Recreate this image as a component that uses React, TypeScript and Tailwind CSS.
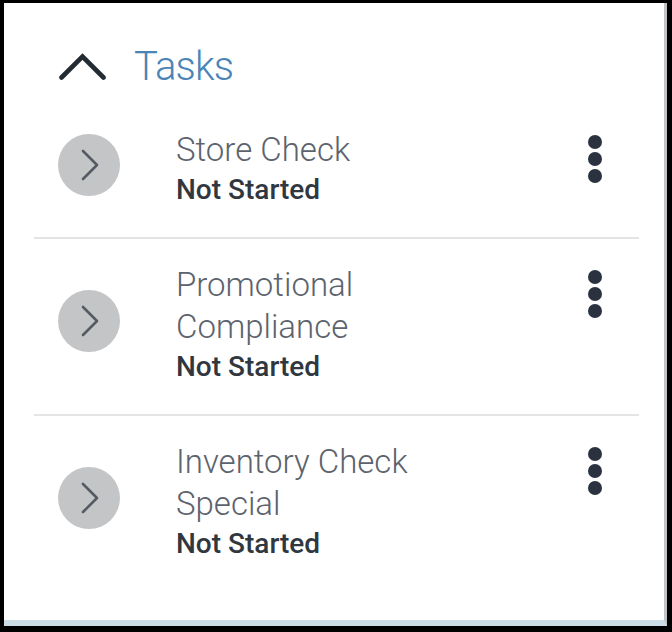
import React from "react";

const tasks: { lines: string[] }[] = [
  { lines: ["Store Check"] },
  { lines: ["Promotional", "Compliance"] },
  { lines: ["Inventory Check", "Special"] },
];

function Kebab() {
  return (
    <div className="mt-[6px] mr-[37px] flex w-[14px] flex-col gap-[3px]">
      <span className="block h-[14px] w-[14px] rounded-full bg-[#2a3240]" />
      <span className="block h-[14px] w-[14px] rounded-full bg-[#2a3240]" />
      <span className="block h-[14px] w-[14px] rounded-full bg-[#2a3240]" />
    </div>
  );
}

function Row({ lines, last }: { lines: string[]; last: boolean }) {
  return (
    <div
      className={
        last
          ? "flex items-center pt-[25px] pb-[28px]"
          : "flex items-center border-b-2 border-[#e3e4e5] pt-[25px] pb-[28px]"
      }
    >
      <div className="ml-[24px] mb-[9px] flex h-[62px] w-[62px] shrink-0 items-center justify-center rounded-full bg-[#c4c5c7]">
        <svg width="62" height="62" viewBox="0 0 62 62" fill="none">
          <path
            d="M25 17 L39 31 L25 45"
            stroke="#555b63"
            strokeWidth="2.6"
            strokeLinecap="round"
            strokeLinejoin="round"
          />
        </svg>
      </div>
      <div className="ml-[56px] flex flex-1 flex-col self-stretch">
        {lines.map((l) => (
          <div
            key={l}
            className="text-[33px] leading-[42px] font-light text-[#5c636d]"
          >
            {l}
          </div>
        ))}
        <div className="text-[28px] leading-[38px] font-medium text-[#30373f]">
          Not Started
        </div>
      </div>
      <div className="self-start">
        <Kebab />
      </div>
    </div>
  );
}

export default function App() {
  return (
    <div
      className="h-[632px] w-[672px] bg-black pt-[3px] pl-[4px] pr-[5px] pb-[6px]"
      style={{ fontFamily: "Roboto, 'Noto Sans', sans-serif" }}
    >
      <div className="h-full w-full border-r-[3px] border-b-[6px] border-r-[#c0c4c6] border-b-[#cddde7] bg-white">
        <div className="ml-[30px] mr-[25px] pt-[39px]">
          <div className="mb-[12px] flex h-[50px] items-center">
            <svg
              className="ml-[25px]"
              width="47"
              height="28"
              viewBox="0 0 47 28"
              fill="none"
            >
              <path
                d="M2.5 24.5 L23.5 3.5 L44.5 24.5"
                stroke="#232b33"
                strokeWidth="4.6"
                strokeLinecap="round"
                strokeLinejoin="miter"
              />
            </svg>
            <span className="ml-[28px] text-[40px] leading-[50px] font-light tracking-[-0.02em] text-[#4a84b6]">
              Tasks
            </span>
          </div>
          {tasks.map((t, i) => (
            <Row key={i} lines={t.lines} last={i === tasks.length - 1} />
          ))}
        </div>
      </div>
    </div>
  );
}
